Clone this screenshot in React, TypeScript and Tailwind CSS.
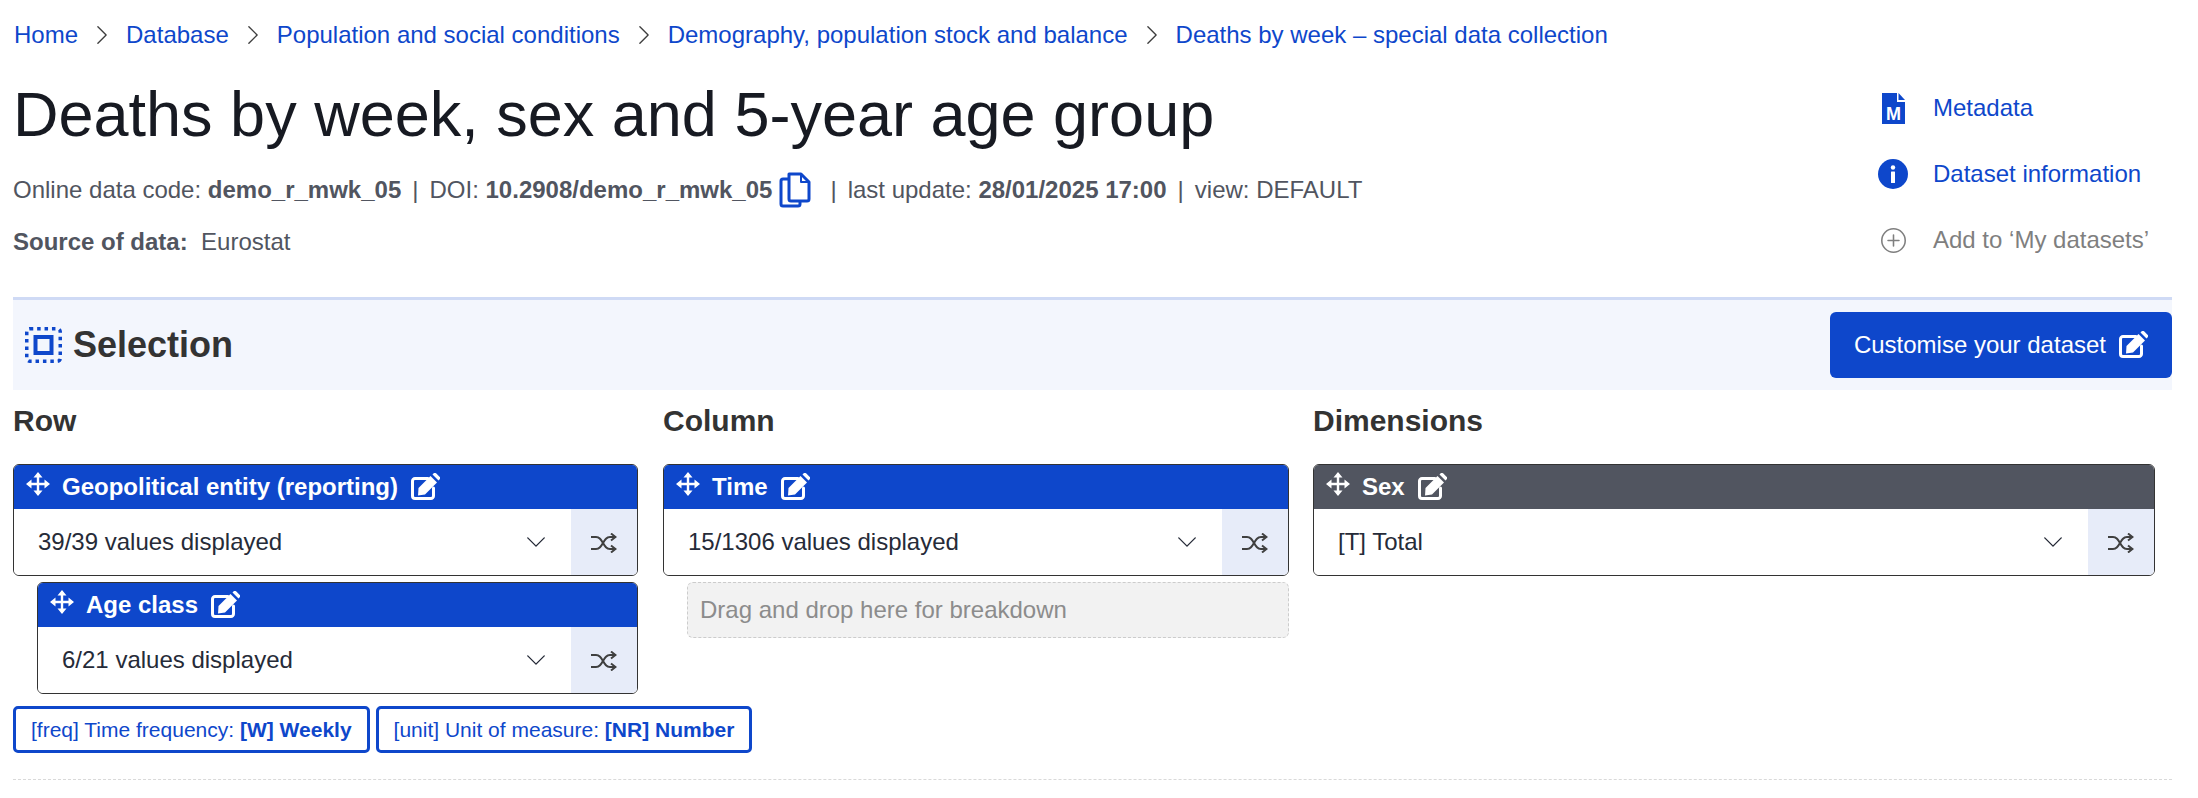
import React from "react";
import { BsChevronDown, BsChevronRight, BsPlusCircle } from "react-icons/bs";

const Crumb = ({ children }: { children: React.ReactNode }) => (
  <a className="text-[#0e47cb]">{children}</a>
);

const Sep = () => <BsChevronRight className="mx-[13px] h-[22px] w-[22px] text-[#404040]" />;

const Pipe = () => <span className="mx-[11px]">|</span>;

const CopyIcon = () => (
  <svg width="32" height="36" viewBox="0 0 32 36" fill="none" stroke="#0e47cb" strokeWidth="3" strokeLinejoin="round" className="ml-[7px] mr-[19px]">
    <path d="M10 2h12l8 8v17a2 2 0 0 1-2 2H12a2 2 0 0 1-2-2V2z" />
    <path d="M22 2v8h8" strokeWidth="2" />
    <path d="M10 7H4a2 2 0 0 0-2 2v23a2 2 0 0 0 2 2h15a2 2 0 0 0 2-2v-3" />
  </svg>
);

const SelectionIcon = () => (
  <svg width="37" height="36" viewBox="0 0 37 36" className="mr-[11px]">
    <rect x="1.75" y="1.75" width="33.5" height="32.5" rx="3" fill="none" stroke="#0e47cb" strokeWidth="3.5" strokeDasharray="3.5 3.9" />
    <rect x="10.5" y="10" width="16" height="16" fill="none" stroke="#0e47cb" strokeWidth="4" />
  </svg>
);

const MetaIcon = () => (
  <svg width="23" height="31" viewBox="0 0 23 31">
    <path d="M0 0h15v9h8v22H0z" fill="#0e47cb" />
    <path d="M16.5 0L23 7h-6.500z" fill="#0e47cb" />
    <text x="11.500" y="27" textAnchor="middle" fill="#fff" fontSize="18" fontWeight="700" fontFamily="Liberation Sans">M</text>
  </svg>
);

const InfoIcon = () => (
  <svg width="30" height="30" viewBox="0 0 30 30">
    <circle cx="15" cy="15" r="15" fill="#0e47cb" />
    <circle cx="15" cy="8.500" r="2.200" fill="#fff" />
    <rect x="13" y="12.500" width="4" height="11.500" rx="0.500" fill="#fff" />
  </svg>
);

const EditIcon = () => (
  <svg width="30" height="28" viewBox="0 0 30 28" className="text-white">
    <path d="M18 5.500H5A2.500 2.500 0 0 0 2.500 8v15A2.500 2.500 0 0 0 5 25.500h16a2.500 2.500 0 0 0 2.500-2.500v-8" fill="none" stroke="currentColor" strokeWidth="3" strokeLinecap="round" />
    <path d="M8.500 15L20.500 3l6.500 6.500-12 12L8 22.500z" fill="currentColor" />
    <path d="M22.500 1.500l1-1a2 2 0 0 1 2.800 0l3.200 3.200a2 2 0 0 1 0 2.800l-1 1z" fill="currentColor" />
  </svg>
);

const MoveIcon = () => (
  <svg width="24" height="24" viewBox="0 0 24 24" className="mb-[6px] mr-[12px] shrink-0 text-white">
    <path d="M12 3v18M3 12h18" stroke="currentColor" strokeWidth="2.400" fill="none" />
    <path d="M12 0l4.500 5.500h-9zM12 24l4.500-5.500h-9zM0 12l5.500-4.500v9zM24 12l-5.500-4.500v9z" fill="currentColor" />
  </svg>
);

const ShuffleIcon = () => (
  <svg width="26" height="20" viewBox="0 0 26 20" fill="none" stroke="#404040" strokeWidth="2" className="mt-[1px]">
    <path d="M0 4h5c3.500 0 5 2.500 7 6s3.500 6 7 6h5" />
    <path d="M0 16h5c3.500 0 5-2.500 7-6s3.500-6 7-6h5" />
    <path d="M20 0.500L24.500 4 20 7.500M20 12.500l4.500 3.500-4.500 3.500" />
  </svg>
);

function Card({ title, value, dark }: { title: string; value: string; dark?: boolean }) {
  return (
    <div className="h-[112px] overflow-hidden rounded-[6px] border border-[#333]">
      <div className={`flex h-[44px] items-center pl-[12px] font-bold text-white ${dark ? "bg-[#515560]" : "bg-[#0e47cb]"}`}>
        <MoveIcon />
        <span>{title}</span>
        <span className="ml-[12px] flex"><EditIcon /></span>
      </div>
      <div className="flex h-[66px] items-center bg-white">
        <span className="flex-1 pl-[24px] text-[#262b38]">{value}</span>
        <BsChevronDown className="mr-[24px] h-[22px] w-[22px] text-[#262b38]" />
        <div className="flex h-full w-[66px] items-center justify-center bg-[#e7ecf9]">
          <ShuffleIcon />
        </div>
      </div>
    </div>
  );
}

const Chip = ({ a, b }: { a: string; b: string }) => (
  <div className="flex h-[47px] items-center rounded-[5px] border-[3px] border-[#0e47cb] px-[15px] text-[21px] text-[#0e47cb]">
    <span className="whitespace-pre">{a} </span>
    <b>{b}</b>
  </div>
);

export default function App() {
  return (
    <div className="h-[798px] overflow-hidden bg-white pl-[13px] pr-[26px] text-[24px] leading-[32px] font-['Liberation_Sans',Arial,sans-serif]">
      <nav className="flex h-[70px] items-center whitespace-nowrap pl-[1px]">
        <Crumb>Home</Crumb><Sep />
        <Crumb>Database</Crumb><Sep />
        <Crumb>Population and social conditions</Crumb><Sep />
        <Crumb>Demography, population stock and balance</Crumb><Sep />
        <Crumb>Deaths by week – special data collection</Crumb>
      </nav>

      <div className="flex h-[227px] justify-between">
        <div>
          <h1 className="h-[90px] text-[63px] leading-[90px] text-[#171a22] -mt-[1px]">Deaths by week, sex and 5-year age group</h1>
          <div className="mt-[11px] flex h-[40px] items-center whitespace-pre text-[#515560]">
            <span>Online data code: <b>demo_r_mwk_05</b><Pipe />DOI: <b>10.2908/demo_r_mwk_05</b></span>
            <CopyIcon />
            <span>|<span className="ml-[11px]">last update: </span><b>28/01/2025 17:00</b><Pipe />view: DEFAULT</span>
          </div>
          <div className="mt-[16px] whitespace-pre text-[#515560]">
            <b>Source of data:</b>  Eurostat
          </div>
        </div>
        <div className="flex w-[295px] flex-col pt-[5px]">
          {[
            { icon: <MetaIcon />, label: "Metadata", cls: "text-[#0e47cb]" },
            { icon: <InfoIcon />, label: "Dataset information", cls: "text-[#0e47cb]" },
            { icon: <BsPlusCircle className="h-[25px] w-[25px] text-[#7f7f7f]" />, label: "Add to ‘My datasets’", cls: "text-[#7f7f7f]" },
          ].map((r) => (
            <div key={r.label} className="flex h-[66px] items-center">
              <span className="flex w-[56px] justify-center pr-[24px]">{r.icon}</span>
              <span className={`whitespace-nowrap ${r.cls}`}>{r.label}</span>
            </div>
          ))}
        </div>
      </div>

      <div className="flex h-[93px] items-center justify-between border-t-[3px] border-[#cfdaf5] bg-[#f3f6fd] pl-[12px]">
        <div className="flex items-center">
          <SelectionIcon />
          <h2 className="text-[36px] font-bold leading-[40px] text-[#333]">Selection</h2>
        </div>
        <button className="flex h-[66px] items-center rounded-[6px] bg-[#0e47cb] px-[24px] text-white">
          Customise your dataset
          <span className="ml-[12px] flex"><EditIcon /></span>
        </button>
      </div>

      <div className="flex pt-[15px]">
        <div className="w-[650px] pr-[25px]">
          <h3 className="mb-[28px] h-[31px] text-[30px] font-bold leading-[31px] text-[#333]">Row</h3>
          <Card title="Geopolitical entity (reporting)" value="39/39 values displayed" />
          <div className="mt-[6px] pl-[24px]">
            <Card title="Age class" value="6/21 values displayed" />
          </div>
        </div>
        <div className="w-[650px] pr-[24px]">
          <h3 className="mb-[28px] h-[31px] text-[30px] font-bold leading-[31px] text-[#333]">Column</h3>
          <Card title="Time" value="15/1306 values displayed" />
          <div className="ml-[24px] mt-[6px] flex h-[56px] items-center rounded-[6px] border border-dashed border-[#ccc] bg-[#f2f2f2] px-[12px] text-[#8c8c8c]">
            Drag and drop here for breakdown
          </div>
        </div>
        <div className="w-[842px]">
          <h3 className="mb-[28px] h-[31px] text-[30px] font-bold leading-[31px] text-[#333]">Dimensions</h3>
          <Card title="Sex" value="[T] Total" dark />
        </div>
      </div>

      <div className="mt-[12px] flex gap-[6px]">
        <Chip a="[freq] Time frequency:" b="[W] Weekly" />
        <Chip a="[unit] Unit of measure:" b="[NR] Number" />
      </div>

      <div className="mt-[26px] border-t border-dashed border-[#d9d9d9]" />
    </div>
  );
}
